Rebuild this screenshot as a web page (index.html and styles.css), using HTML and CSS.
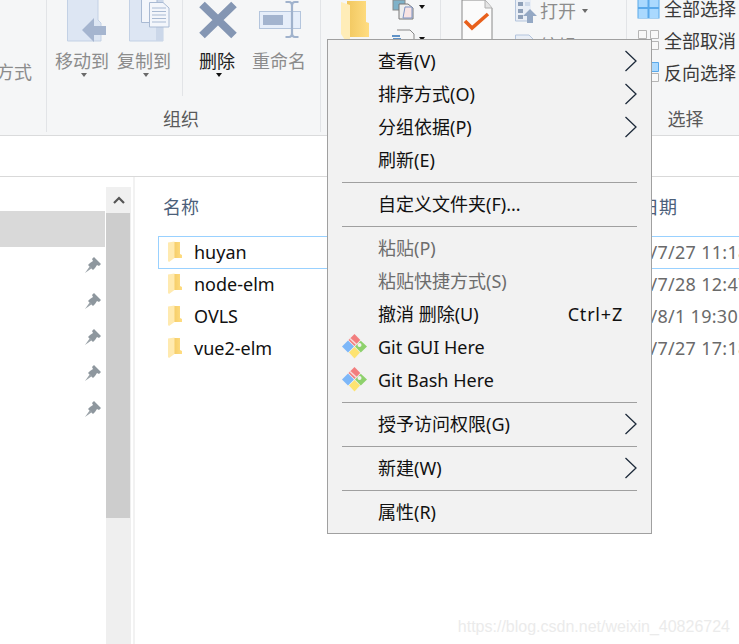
FILE: index.html
```html
<!DOCTYPE html>
<html lang="zh-CN">
<head>
<meta charset="utf-8">
<title>资源管理器</title>
<link rel="stylesheet" href="styles.css">
</head>
<body>
<svg class="defs" width="0" height="0" aria-hidden="true">
  <defs>
    <linearGradient id="fg" x1="0" y1="0" x2="1" y2="0"><stop offset="0" stop-color="#f1c75f"/><stop offset="1" stop-color="#ffdd82"/></linearGradient>
    <symbol id="folder" viewBox="0 0 14 21">
      <path d="M3 1H12V13L14 14V17H3Z" fill="url(#fg)"/>
      <path d="M0 1.500L6.500 .5V17L1 21L0 20Z" fill="#ffeab0"/>
    </symbol>
    <symbol id="pin" viewBox="0 0 16 16">
      <path d="M3 8L8 13L10 11L12 8L14 9L16 7L9 0L7 2L8 4L5 6Z" fill="#8e979e"/>
      <path d="M0 16L5 9L7 11Z" fill="#9aa2a8"/>
    </symbol>
    <symbol id="git" viewBox="0 0 25 25">
      <path d="M0 12.500L6 6.500L12 12.500L6 18.500Z" fill="#7db7f8"/>
      <path d="M12.500 13L18 18.500L12.500 24.500L7 18.500Z" fill="#fde371"/>
      <path d="M13 12.500L18.800 6.700L25 12.500L18.800 18.500Z" fill="#8ed16c"/>
      <circle cx="17.500" cy="11" r="2" fill="#f2f2f2"/>
      <path d="M6.500 6L12.500 0L18.300 6L12.500 12Z" fill="#f27e7e"/>
      <path d="M8 4.500L14.500 10.500" stroke="#f7dada" stroke-width="1.600"/>
    </symbol>
    <symbol id="chev" viewBox="0 0 14 22">
      <path d="M1.500 1L12 11L1.500 21" fill="none" stroke="#1d2a3a" stroke-width="1.300"/>
    </symbol>
  </defs>
</svg>

<div class="ribbon">
  <section class="group g1">
    <div class="body"><span class="tx dis">方式</span></div>
  </section>
  <section class="group g2">
    <div class="body">
      <div class="big dis">
        <svg class="bigicon" viewBox="0 0 54 44"><path d="M12.500 0V41H46V23L43 20V0" fill="#dde6f3" stroke="#c3d1e5"/><path d="M39 18V26H51V35H39V42L27 30Z" fill="#a5b5cf"/></svg>
        <span class="tx">移动到</span><i class="caret"></i>
      </div>
      <div class="big dis">
        <svg class="bigicon" viewBox="0 0 54 44"><path d="M12.500 0V41H46V0" fill="#dde6f3" stroke="#c3d1e5"/><rect x="39" y="0" width="7" height="41" fill="#cbd7e9"/><path d="M24.500 0V22.500H40V0" fill="#f3f6fb" stroke="#a9bad3"/><path d="M32.500 2.500H46L52 8V27H32.500Z" fill="#f3f6fb" stroke="#a9bad3"/><path d="M35 8H49M35 11.500H49M35 15H49M35 18.500H49M35 22H49" stroke="#a9bad3"/></svg>
        <span class="tx">复制到</span><i class="caret"></i>
      </div>
      <span class="vsep"></span>
      <div class="big">
        <svg class="bigicon" viewBox="0 0 54 44"><path d="M12 4.500L44 35.500M44 4.500L12 35.500" stroke="#8496b3" stroke-width="8"/></svg>
        <span class="tx">删除</span><i class="caret dark"></i>
      </div>
      <div class="big dis">
        <svg class="bigicon" viewBox="0 0 54 44"><rect x="7.500" y="11.500" width="41" height="17" fill="#e6eefa" stroke="#b4c5dd"/><rect x="11" y="15" width="20" height="10" fill="#a3b4cf"/><path d="M33.500 2H37C39 2 40 3.500 40 6V33C40 35.500 39 37 37 37H33.500M46.500 2H43C41 2 40 3.500 40 6M46.500 37H43C41 37 40 35.500 40 33" fill="none" stroke="#a0b2cc" stroke-width="2.200"/></svg>
        <span class="tx">重命名</span>
      </div>
    </div>
    <div class="label shifted">组织</div>
  </section>
  <section class="group g3">
    <div class="body">
      <svg class="bigfolder" viewBox="0 0 29 40"><path d="M6 1H25V22L28 23V37H6Z" fill="url(#fg)"/><path d="M0 2L9 5V39L4 40L0 34Z" fill="#ffedb8"/></svg>
      <div class="minis">
        <div class="mini">
          <svg class="miniicon" viewBox="0 0 24 20"><rect x="1" y="0" width="12" height="10" fill="#7fb2c9" stroke="#8a8a8a"/><path d="M7 4H16L21 8V19H7Z" fill="#eee" stroke="#777"/><path d="M13 7H20V18H11Z" fill="#f8e3e3" stroke="#7d93c4"/></svg>
          <i class="caret dark"></i>
        </div>
        <div class="mini second">
          <svg class="miniicon" viewBox="0 0 24 12"><path d="M5 1H18L22 5V12H5" fill="#f6f6f6" stroke="#888"/><path d="M0 7H8M1 10H9" stroke="#2e72b8" stroke-width="1.400"/></svg>
          <i class="caret dark"></i>
        </div>
      </div>
    </div>
  </section>
  <section class="group g4">
    <div class="body">
      <svg class="doc" viewBox="0 0 32 60"><path d="M1 0H24L31 8V60H1Z" fill="#fbfbfb" stroke="#8a8a8a"/><path d="M24 0V8H31" fill="#e4e4e4" stroke="#b0b0b0"/><path d="M4 21L11 28L27 14" fill="none" stroke="#e8601c" stroke-width="3.600"/></svg>
      <div class="opens">
        <div class="open dis">
          <svg class="openicon" viewBox="0 0 22 24"><path d="M.5 0V22H12" fill="#e9eef6" stroke="#b4c5dd"/><rect x="1" y="0" width="15" height="21" fill="#e9eef6"/><path d="M3 3H8V7H3ZM3 10H8V14H3ZM3 16H8V20H3Z" fill="#8fa0b8"/><path d="M10 4H15M10 6H15" stroke="#b4c5dd"/><path d="M15 10L22 17H18V24H12V17H8Z" fill="#94a8c4"/></svg>
          <span class="tx">打开</span><i class="caret"></i>
        </div>
        <div class="open dis lower">
          <svg class="openicon" viewBox="0 0 22 24"><path d="M.5 1H14L20 7V24H.5Z" fill="#e9eef6" stroke="#b4c5dd"/></svg>
          <span class="tx">编辑</span>
        </div>
      </div>
    </div>
  </section>
  <section class="group g5">
    <div class="body">
      <div class="sel">
        <svg class="selicon" viewBox="0 0 23 24"><rect x=".5" y=".5" width="22" height="21" fill="#5aa9ea"/><path d="M1.500 1H10.500V10H1.500ZM12.500 1H21.500V10H12.500ZM1.500 12H10.500V21H1.500ZM12.500 12H21.500V21H12.500Z" fill="#aad9fe"/></svg>
        <span class="tx">全部选择</span>
      </div>
      <div class="sel">
        <svg class="selicon" viewBox="0 0 23 24"><path d="M1.500 1.500H9.500V9.500H1.500ZM13.500 1.500H21.500V9.500H13.500ZM1.500 12.500H9.500V20.500H1.500ZM13.500 12.500H21.500V20.500H13.500Z" fill="#f8f8f8" stroke="#b5b5b5"/></svg>
        <span class="tx">全部取消</span>
      </div>
      <div class="sel">
        <svg class="selicon" viewBox="0 0 23 24"><path d="M13.500 1.500H21.500V10.500H13.500Z" fill="#aad9fe" stroke="#5aa9ea"/><path d="M13.500 12.500H21.500V20.500H13.500Z" fill="#f8f8f8" stroke="#b5b5b5"/></svg>
        <span class="tx">反向选择</span>
      </div>
    </div>
    <div class="label">选择</div>
  </section>
</div>

<div class="address"></div>

<main class="explorer">
  <nav class="nav">
    <div class="quick selected"></div>
    <div class="quick"><svg class="pin"><use href="#pin"/></svg></div>
    <div class="quick"><svg class="pin"><use href="#pin"/></svg></div>
    <div class="quick"><svg class="pin"><use href="#pin"/></svg></div>
    <div class="quick"><svg class="pin"><use href="#pin"/></svg></div>
    <div class="quick"><svg class="pin"><use href="#pin"/></svg></div>
  </nav>
  <div class="scrollbar">
    <div class="up"><svg class="upicon" viewBox="0 0 12 8"><path d="M1 7L6 2L11 7" fill="none" stroke="#555" stroke-width="2.200"/></svg></div>
    <div class="thumb"></div>
  </div>
  <div class="files">
    <div class="head"><span class="hname">名称</span><span>修改日期</span></div>
    <div class="row current"><svg class="ficon"><use href="#folder"/></svg><span class="fname">huyan</span><span class="date">2018/7/27 11:18</span></div>
    <div class="row"><svg class="ficon"><use href="#folder"/></svg><span class="fname">node-elm</span><span class="date">2018/7/28 12:47</span></div>
    <div class="row"><svg class="ficon"><use href="#folder"/></svg><span class="fname">OVLS</span><span class="date">2018/8/1 19:30</span></div>
    <div class="row"><svg class="ficon"><use href="#folder"/></svg><span class="fname">vue2-elm</span><span class="date">2018/7/27 17:18</span></div>
  </div>
</main>

<div class="menu">
  <div class="item"><span class="text">查看(V)</span><span class="arrow"><svg class="chev"><use href="#chev"/></svg></span></div>
  <div class="item"><span class="text">排序方式(O)</span><span class="arrow"><svg class="chev"><use href="#chev"/></svg></span></div>
  <div class="item"><span class="text">分组依据(P)</span><span class="arrow"><svg class="chev"><use href="#chev"/></svg></span></div>
  <div class="item"><span class="text">刷新(E)</span></div>
  <div class="sep"></div>
  <div class="item"><span class="text">自定义文件夹(F)...</span></div>
  <div class="sep"></div>
  <div class="item off"><span class="text">粘贴(P)</span></div>
  <div class="item off"><span class="text">粘贴快捷方式(S)</span></div>
  <div class="item"><span class="text">撤消 删除(U)</span><span class="key">Ctrl+Z</span></div>
  <div class="item"><svg class="giticon"><use href="#git"/></svg><span class="text">Git GUI Here</span></div>
  <div class="item"><svg class="giticon"><use href="#git"/></svg><span class="text">Git Bash Here</span></div>
  <div class="sep"></div>
  <div class="item"><span class="text">授予访问权限(G)</span><span class="arrow"><svg class="chev"><use href="#chev"/></svg></span></div>
  <div class="sep"></div>
  <div class="item"><span class="text">新建(W)</span><span class="arrow"><svg class="chev"><use href="#chev"/></svg></span></div>
  <div class="sep"></div>
  <div class="item"><span class="text">属性(R)</span></div>
</div>

<div class="watermark">https://blog.csdn.net/weixin_40826724</div>
</body>
</html>
```
FILE: styles.css
```css
* { box-sizing: border-box; }
html, body { margin: 0; height: 100%; }
body {
  position: relative;
  width: 739px;
  height: 644px;
  overflow: hidden;
  background: #fff;
  color: #1a1a1a;
  font: 18px/22px "Noto Sans", "Noto Sans CJK SC", sans-serif;
}
.defs { position: absolute; }

/* ribbon */
.ribbon {
  display: flex;
  height: 136px;
  overflow: hidden;
  background: #f5f6f7;
  border-bottom: 1px solid #dadbdc;
}
.group {
  flex: none;
  display: flex;
  flex-direction: column;
  height: 132px;
  border-right: 1px solid #e2e4e7;
}
.body { display: flex; height: 106px; flex: none; }
.label { height: 26px; line-height: 26px; text-align: center; color: #5a5a5a; }
.label.shifted { padding-right: 5px; }
.tx { white-space: nowrap; }
.dis { color: #8c8c8c; }
.g1 { width: 47px; }
.g1 .body { justify-content: flex-end; padding: 61px 14px 0 0; }
.g2 { width: 274px; }
.g2 .body { padding-left: 8px; gap: 8px; }
.g3 { width: 120px; }
.g3 .body { padding-left: 20px; }
.g4 { width: 186px; }
.g4 .body { padding-left: 20px; }
.g5 { width: 118px; }
.g5 .body { padding-left: 10px; flex-direction: column; margin-top: -7px; height: 113px; }

.big { width: 54px; display: flex; flex-direction: column; align-items: center; }
.bigicon { display: block; width: 54px; height: 44px; flex: none; }
.big .tx { margin-top: 6px; }
.caret {
  display: block;
  width: 0;
  height: 0;
  border: 3.500px solid transparent;
  border-top: 4px solid #6a6a6a;
  border-bottom: 0;
}
.big .caret { margin: 1px 0 0 4px; }
.caret.dark { border-top-color: #111; }
.big:not(.dis) { color: #222; }
.vsep { width: 1px; height: 96px; margin: 0 -1px 0 3px; background: #e2e4e7; }

.bigfolder { display: block; flex: none; width: 29px; height: 40px; }
.minis { margin-left: 22px; }
.mini { display: flex; align-items: flex-start; gap: 3px; }
.miniicon { display: block; width: 24px; height: 20px; }
.mini .caret { margin-top: 5px; }
.second { margin-top: 9px; }
.second .miniicon { height: 12px; }
.second .caret { margin-top: 8px; }

.doc { display: block; flex: none; width: 32px; height: 60px; }
.opens { margin-left: 22px; }
.open { display: flex; align-items: center; height: 32px; margin-top: -5px; margin-bottom: 5px; }
.open.lower { margin-top: -2px; }
.openicon { display: block; flex: none; width: 22px; height: 24px; margin-right: 3px; }
.open .caret { margin-left: 6px; }

.sel { display: flex; align-items: center; height: 32px; color: #3a3a3a; }
.selicon { display: block; flex: none; width: 23px; height: 24px; margin-right: 4px; }

/* address bar */
.address { height: 41px; background: #fff; border-bottom: 1px solid #d9d9d9; }

/* lower pane */
.explorer { display: flex; height: 467px; }
.nav { flex: none; width: 106px; padding-top: 34px; }
.quick { display: flex; align-items: center; justify-content: flex-end; width: 105px; height: 36px; padding-right: 4px; }
.quick.selected { background: #d9d9d9; }
.pin { display: block; width: 16px; height: 16px; }
.scrollbar {
  flex: none;
  width: 25px;
  margin-top: 10px;
  background: #efefef;
}
.up { display: flex; align-items: center; justify-content: center; height: 26px; background: #f0f0f0; }
.upicon { display: block; width: 12px; height: 8px; }
.thumb { width: 24px; height: 305px; background: #cdcdcd; }

.files {
  flex: none;
  width: 608px;
  margin-left: 2px;
  border-left: 2px solid #f2f2f2;
  overflow: hidden;
}
.head { display: flex; height: 59px; padding: 19px 0 0 28px; color: #4c607a; white-space: nowrap; }
.hname { flex: none; width: 442px; }
.row {
  display: flex;
  align-items: center;
  width: 720px;
  height: 33px;
  margin: 0 0 -1px 23px;
  padding: 0 0 2px 9px;
  border: 1px solid transparent;
  border-right: 0;
}
.row.current { border-color: #99d1ff; }
.ficon { display: block; flex: none; width: 14px; height: 21px; margin-right: 12px; }
.fname { flex: none; width: 414px; color: #111; }
.date { color: #6a6a6a; white-space: nowrap; letter-spacing: .3px; }

/* context menu */
.menu {
  position: absolute;
  left: 327px;
  top: 39px;
  width: 325px;
  height: 495px;
  padding-top: 5px;
  background: #f2f2f2;
  border: 1px solid #a0a0a0;
}
.item { position: relative; display: flex; align-items: center; height: 33px; padding: 0 0 2px 50px; color: #111; }
.item.off { color: #6d6d6d; }
.text { flex: 1; white-space: nowrap; }
.key { margin-right: 28px; letter-spacing: .8px; }
.arrow { display: block; width: 28px; }
.chev { display: block; width: 14px; height: 22px; margin-left: 1px; }
.giticon { position: absolute; left: 14px; top: 3px; width: 25px; height: 25px; }
.sep { height: 1px; margin: 5px 14px; background: #a0a0a0; }

.watermark {
  position: absolute;
  right: 9px;
  bottom: 7px;
  font: 16px/20px "Liberation Sans", sans-serif;
  color: #ebebeb;
  white-space: nowrap;
}
```
